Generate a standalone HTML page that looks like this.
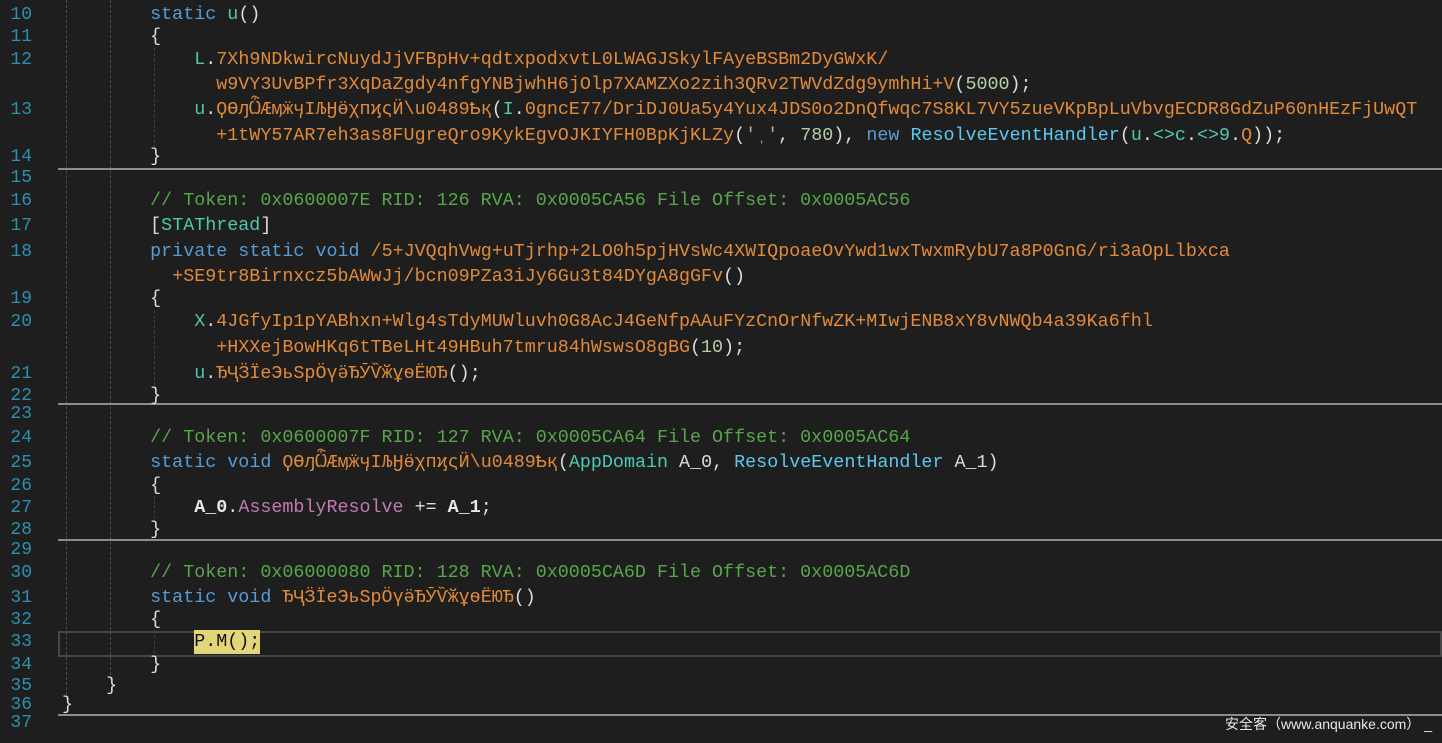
<!DOCTYPE html><html><head><meta charset="utf-8"><style>
body{margin:0;width:1442px;height:743px;background:#1e1e1e;overflow:hidden;position:relative;font-family:"Liberation Mono","DejaVu Sans Mono",monospace;font-size:18.36px;color:#dcdcdc}
.r{position:absolute;left:0;height:22px;line-height:24px;white-space:pre}
.n{position:absolute;left:0;width:32px;text-align:right;color:#2b91af;font-size:18px}
.c{position:absolute;left:62px}
.k{color:#569cd6}.t{color:#4ec9b0}.m{color:#e08a3a}.g{color:#57a64a}.d{color:#5cc8f0}.p{color:#c07ab4}.num{color:#b5cea8}.s{color:#d69d85}.b{font-weight:bold;color:#e8e8e8}
.sep{position:absolute;left:58px;right:0;height:2px;background:#8c8c8c}
.vg{position:absolute;width:0;border-left:1px dashed #4a4a4a}
</style></head><body>
<div style="position:absolute;left:58px;right:0;top:631px;height:22px;border:2px solid #464646"></div>
<div class="vg" style="left:66px;top:0;height:700px"></div>
<div class="vg" style="left:110px;top:0;height:680px;border-color:#2f5a55"></div>
<div class="vg" style="left:154px;top:48px;height:100px;border-color:#2a4560"></div>
<div class="vg" style="left:154px;top:310px;height:80px;border-color:#2a4560"></div>
<div class="vg" style="left:154px;top:496px;height:22px;border-color:#2a4560"></div>
<div class="vg" style="left:154px;top:630px;height:24px;border-color:#2a4560"></div>
<div class="sep" style="top:168px"></div>
<div class="sep" style="top:403px"></div>
<div class="sep" style="top:539px"></div>
<div class="sep" style="top:714px"></div>
<div style="position:absolute;left:1225px;top:714px;font-family:'Liberation Sans','Noto Sans CJK SC',sans-serif;font-size:14px;line-height:20px;color:#e8e8e8">安全客（www.anquanke.com）<span style="margin-left:4px">_</span></div>

<div class="r" style="top:3px"><span class="n">10</span><span class="c">        <span class="k">static</span> <span class="t">u</span>()</span></div>
<div class="r" style="top:25px"><span class="n">11</span><span class="c">        {</span></div>
<div class="r" style="top:48px"><span class="n">12</span><span class="c">            <span class="t">L</span>.<span class="m">7Xh9NDkwircNuydJjVFBpHv+qdtxpodxvtL0LWAGJSkylFAyeBSBm2DyGWxK/</span></span></div>
<div class="r" style="top:73px"><span class="c">              <span class="m">w9VY3UvBPfr3XqDaZgdy4nfgYNBjwhH6jOlp7XAMZXo2zih3QRv2TWVdZdg9ymhHi+V</span>(<span class="num">5000</span>);</span></div>
<div class="r" style="top:98px"><span class="n">13</span><span class="c">            <span class="t">u</span>.<span class="m">ϘϴԓѼӔӎӝӌӀЉӇӫχпϗςӤ\u0489Ҍқ</span>(<span class="t">I</span>.<span class="m">0gncE77/DriDJ0Ua5y4Yux4JDS0o2DnQfwqc7S8KL7VY5zueVKpBpLuVbvgECDR8GdZuP60nHEzFjUwQT</span></span></div>
<div class="r" style="top:124px"><span class="c">              <span class="m">+1tWY57AR7eh3as8FUgreQro9KykEgvOJKIYFH0BpKjKLZy</span>(<span class="s">'ˌ'</span>, <span class="num">780</span>), <span class="k">new</span> <span class="d">ResolveEventHandler</span>(<span class="t">u</span>.<span class="t">&lt;&gt;c</span>.<span class="t">&lt;&gt;9</span>.<span class="m">Q</span>));</span></div>
<div class="r" style="top:145px"><span class="n">14</span><span class="c">        }</span></div>
<div class="r" style="top:166px"><span class="n">15</span></div>
<div class="r" style="top:189px"><span class="n">16</span><span class="c">        <span class="g">// Token: 0x0600007E RID: 126 RVA: 0x0005CA56 File Offset: 0x0005AC56</span></span></div>
<div class="r" style="top:214px"><span class="n">17</span><span class="c">        [<span class="t">STAThread</span>]</span></div>
<div class="r" style="top:240px"><span class="n">18</span><span class="c">        <span class="k">private</span> <span class="k">static</span> <span class="k">void</span> <span class="m">/5+JVQqhVwg+uTjrhp+2LO0h5pjHVsWc4XWIQpoaeOvYwd1wxTwxmRybU7a8P0GnG/ri3aOpLlbxca</span></span></div>
<div class="r" style="top:265px"><span class="c">          <span class="m">+SE9tr8Birnxcz5bAWwJj/bcn09PZa3iJy6Gu3t84DYgA8gGFv</span>()</span></div>
<div class="r" style="top:287px"><span class="n">19</span><span class="c">        {</span></div>
<div class="r" style="top:310px"><span class="n">20</span><span class="c">            <span class="t">X</span>.<span class="m">4JGfyIp1pYABhxn+Wlg4sTdyMUWluvh0G8AcJ4GeNfpAAuFYzCnOrNfwZK+MIwjENB8xY8vNWQb4a39Ka6fhl</span></span></div>
<div class="r" style="top:336px"><span class="c">              <span class="m">+HXXejBowHKq6tTBeLHt49HBuh7tmru84hWswsO8gBG</span>(<span class="num">10</span>);</span></div>
<div class="r" style="top:362px"><span class="n">21</span><span class="c">            <span class="t">u</span>.<span class="m">ЂҶӞЇеЭьЅpӦүӛЂӮѶӂұѳЁЮЂ</span>();</span></div>
<div class="r" style="top:384px"><span class="n">22</span><span class="c">        }</span></div>
<div class="r" style="top:402px"><span class="n">23</span></div>
<div class="r" style="top:426px"><span class="n">24</span><span class="c">        <span class="g">// Token: 0x0600007F RID: 127 RVA: 0x0005CA64 File Offset: 0x0005AC64</span></span></div>
<div class="r" style="top:451px"><span class="n">25</span><span class="c">        <span class="k">static</span> <span class="k">void</span> <span class="m">ϘϴԓѼӔӎӝӌӀЉӇӫχпϗςӤ\u0489Ҍқ</span>(<span class="t">AppDomain</span> A_0, <span class="d">ResolveEventHandler</span> A_1)</span></div>
<div class="r" style="top:474px"><span class="n">26</span><span class="c">        {</span></div>
<div class="r" style="top:496px"><span class="n">27</span><span class="c">            <span class="b">A_0</span>.<span class="p">AssemblyResolve</span> += <span class="b">A_1</span>;</span></div>
<div class="r" style="top:518px"><span class="n">28</span><span class="c">        }</span></div>
<div class="r" style="top:538px"><span class="n">29</span></div>
<div class="r" style="top:561px"><span class="n">30</span><span class="c">        <span class="g">// Token: 0x06000080 RID: 128 RVA: 0x0005CA6D File Offset: 0x0005AC6D</span></span></div>
<div class="r" style="top:586px"><span class="n">31</span><span class="c">        <span class="k">static</span> <span class="k">void</span> <span class="m">ЂҶӞЇеЭьЅpӦүӛЂӮѶӂұѳЁЮЂ</span>()</span></div>
<div class="r" style="top:608px"><span class="n">32</span><span class="c">        {</span></div>
<div class="r" style="top:630px"><span class="n">33</span><span class="c">            <span style="background:#e3d67a;color:#111;padding:1px 0 2px">P.M();</span></span></div>
<div class="r" style="top:653px"><span class="n">34</span><span class="c">        }</span></div>
<div class="r" style="top:674px"><span class="n">35</span><span class="c">    }</span></div>
<div class="r" style="top:693px"><span class="n">36</span><span class="c">}</span></div>
<div class="r" style="top:711px"><span class="n">37</span></div>
</body></html>
